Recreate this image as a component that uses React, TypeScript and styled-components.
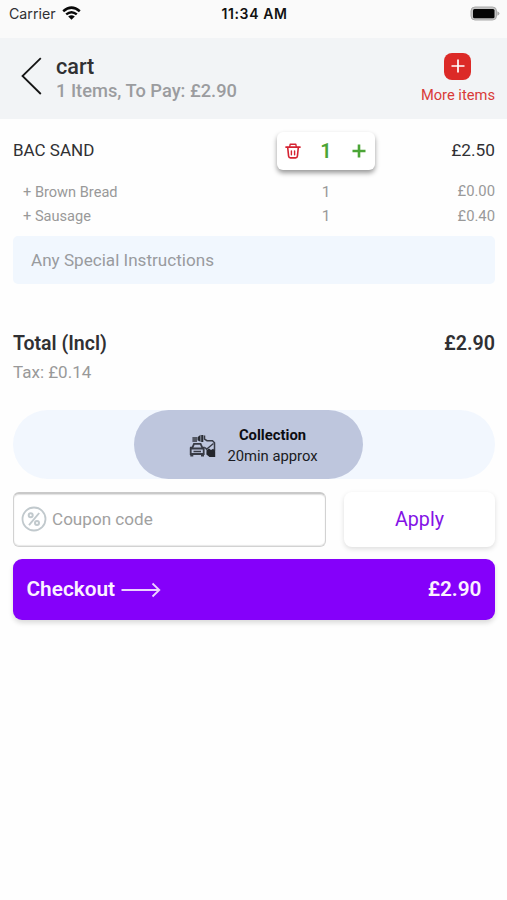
import React from "react";
import styled, { createGlobalStyle } from "styled-components";

const Global = createGlobalStyle`
  * { box-sizing: border-box; }
  body { margin: 0; background: #fefefe; font-family: Roboto, sans-serif; color: #303033; }
  button, input { font-family: inherit; border: 0; padding: 0; background: none; }
  svg { display: block; flex: none; }
`;

const Screen = styled.div`
  width: 507px;
  height: 900px;
  overflow: hidden;
  display: flex;
  flex-direction: column;
`;

const Label = styled.span<{ $size: number; $weight?: number; $color?: string; $track?: number }>`
  font-size: ${(p) => p.$size}px;
  font-weight: ${(p) => p.$weight ?? 400};
  color: ${(p) => p.$color ?? "#303033"};
  letter-spacing: ${(p) => p.$track ?? 0}px;
  line-height: 1.2;
  white-space: nowrap;
`;

const StatusBar = styled.div`
  height: 38px;
  padding: 0 7px 10px 9px;
  display: grid;
  grid-template-columns: 1fr auto 1fr;
  align-items: center;
  background: #fafafa;
  font-family: Inter, sans-serif;
`;

const StatusLeft = styled.div`
  display: flex;
  align-items: center;
  gap: 6px;
  > svg { margin-top: -1px; }
`;

const StatusRight = styled.div`
  display: flex;
  justify-content: flex-end;
  padding-bottom: 2px;
`;

const Header = styled.header`
  height: 81px;
  padding: 0 12px 0 20px;
  display: flex;
  align-items: center;
  background: #f2f4f6;
`;

const BackButton = styled.button`
  width: 36px;
  height: 40px;
  margin-top: -6px;
`;

const Titles = styled.div`
  flex: 1;
  display: flex;
  flex-direction: column;
  margin-top: -1px;
`;

const MoreItems = styled.button`
  display: flex;
  flex-direction: column;
  align-items: center;
  gap: 7px;
`;

const PlusTile = styled.span`
  width: 27px;
  height: 27px;
  border-radius: 8px;
  background: #dc2a27;
  display: grid;
  place-items: center;
`;

const Body = styled.main`
  padding: 13px 12px 0 13px;
  display: flex;
  flex-direction: column;
`;

const ItemRow = styled.div<{ $height: number; $indent?: number }>`
  height: ${(p) => p.$height}px;
  padding-left: ${(p) => p.$indent ?? 0}px;
  display: grid;
  grid-template-columns: 1fr 98px 120px;
  align-items: center;
  > :nth-child(2) { text-align: center; }
  > :last-child { text-align: right; }
  > span { margin-top: ${(p) => (p.$indent ? 0 : -2)}px; }
`;

const Stepper = styled.div`
  height: 38px;
  display: grid;
  grid-template-columns: 32px 34px 32px;
  align-items: center;
  justify-items: center;
  border-radius: 6px;
  background: #fff;
  box-shadow: 0 3px 5px rgba(0, 0, 0, 0.4);
`;

const Options = styled.div`
  padding: 10px 0 7px;
`;

const Instructions = styled.input`
  height: 48px;
  padding: 0 18px;
  border-radius: 5px;
  background: #f1f7fe;
  font-size: 17.1px;
  &::placeholder { color: #999b9e; opacity: 1; }
`;

const Summary = styled.div`
  padding: 48px 0 27px;
`;

const SummaryRow = styled.div<{ $height: number }>`
  height: ${(p) => p.$height}px;
  display: flex;
  align-items: center;
  justify-content: space-between;
  & + & { padding-top: 5px; }
`;

const MethodTrack = styled.div`
  height: 69px;
  display: flex;
  justify-content: center;
  padding-right: 12px;
  border-radius: 35px;
  background: #f2f7fe;
`;

const Method = styled.button`
  width: 229px;
  border-radius: 35px;
  background: #bec6dd;
  display: flex;
  align-items: center;
  justify-content: center;
  gap: 11px;
  padding: 3px 0 0 11px;
`;

const MethodText = styled.span`
  display: flex;
  flex-direction: column;
  align-items: center;
  gap: 3px;
`;

const CouponRow = styled.div`
  height: 55px;
  margin: 13px 0 12px;
  display: grid;
  grid-template-columns: 313px 151px;
  justify-content: space-between;
`;

const CouponField = styled.label`
  display: flex;
  align-items: center;
  gap: 5px;
  padding: 0 7px 2px;
  border: 1px solid #d2d2d2;
  border-top: 2px solid #c9c9c9;
  border-radius: 6px;
  background: #fff;
  box-shadow: inset 0 1px 1px #e2e2e2, inset 0 -1px 1px #e8e8e8;
`;

const CouponInput = styled.input`
  flex: 1;
  min-width: 0;
  font-size: 17.1px;
  &::placeholder { color: #a1a1a1; opacity: 1; }
`;

const ApplyButton = styled.button`
  border-radius: 8px;
  background: #fff;
  box-shadow: 0 2px 5px rgba(0, 0, 0, 0.13);
`;

const Checkout = styled.button`
  height: 61px;
  padding: 0 13.5px;
  display: flex;
  align-items: center;
  justify-content: space-between;
  border-radius: 9px;
  background: #8500fa;
  box-shadow: 0 3px 5px rgba(0, 0, 0, 0.14);
`;

const CheckoutLabel = styled.span`
  display: flex;
  align-items: center;
  gap: 6px;
  > svg { margin-top: 1px; }
`;

const WifiIcon = () => (
  <svg width="19" height="15" viewBox="0 0 19 15">
    <g fill="none" stroke="#080808" strokeWidth="2.5">
      <path d="M1.2 5.2Q9.5-2 17.8 5.2" />
      <path d="M4.2 8.4Q9.5 4 14.8 8.4" />
    </g>
    <path d="M6.2 10.5Q9.5 7.9 12.8 10.5L9.5 13.8Z" fill="#080808" />
  </svg>
);

const BatteryIcon = () => (
  <svg width="30" height="15" viewBox="0 0 30 15">
    <rect x="1" y="1" width="25.5" height="13" rx="4" fill="#c4c4c4" stroke="#aaa" strokeWidth="1" />
    <rect x="3" y="3" width="21.5" height="9.2" rx="1.5" fill="#050505" />
    <path d="M27.3 5.2Q29.5 6 29.5 7.5T27.3 9.8Z" fill="#aaa" />
  </svg>
);

const BackIcon = () => (
  <svg width="24" height="40" viewBox="0 0 24 40">
    <path d="M20.8 2.2L2.5 20L20.8 38" fill="none" stroke="#151515" strokeWidth="1.8" />
  </svg>
);

const PlusIcon = ({ size, color, width }: { size: number; color: string; width: number }) => (
  <svg width={size} height={size} viewBox="0 0 14 14">
    <path d="M7 0.5V13.5M0.5 7H13.5" stroke={color} strokeWidth={width} />
  </svg>
);

const TrashIcon = () => (
  <svg width="16" height="16" viewBox="0 0 16 16" fill="none" stroke="#d52332" strokeLinejoin="round" strokeLinecap="round">
    <path d="M1 4.1H15" strokeWidth="1.7" />
    <path d="M4.7 4L5.2 1.2H10.8L11.3 4" strokeWidth="1.4" />
    <path d="M2.7 4.5L3.6 13.2Q3.8 14.9 5.4 14.9H10.6Q12.2 14.9 12.4 13.2L13.3 4.5" strokeWidth="1.6" />
    <path d="M6.4 8V11.7M9.6 8V11.7" strokeWidth="1.4" />
  </svg>
);

const CarIcon = () => (
  <svg width="27" height="24" viewBox="0 0 27 24" fill="none" stroke="#383b45">
    <path d="M3.2 14.2L5 9.8H11.6L13.5 14.2" strokeWidth="1.8" />
    <path d="M1.7 14.5H14.7V20H1.7Z" strokeWidth="1.8" />
    <path d="M1 13.5H3M13.7 13.5H15.8M4.5 17.5H12" strokeWidth="1.7" />
    <path d="M2.8 20V22.5M13.5 20V22.5" strokeWidth="3" />
    <rect x="3.4" y="3" width="4.6" height="5" fill="#555965" stroke="none" />
    <path d="M8.5 3.2L11.5 0.8V7.7L8.5 6.2ZM12.2 1H14.3V8H12.2Z" fill="#292c33" stroke="none" />
    <path d="M15.5 1.5V5L18 6.7H23.5L25.5 8.7V17" strokeWidth="1.5" />
    <path d="M24.5 9.5L17.5 15.3L16.2 13.5" strokeWidth="1.4" />
    <path d="M17.5 16.2L20 14.5L22 16L24.2 14.8L26.2 17.2V23H20.5L17.4 20.5Z" fill="#24262c" stroke="none" />
  </svg>
);

const PercentIcon = () => (
  <svg width="26" height="26" viewBox="0 0 26 26" fill="none" stroke="#c1c9cd">
    <circle cx="13" cy="13" r="11.5" strokeWidth="1.8" />
    <path d="M18.2 7L8 19.2" strokeWidth="1.9" />
    <circle cx="9.7" cy="9.2" r="2" strokeWidth="2" />
    <circle cx="16" cy="16.9" r="2" strokeWidth="2" />
  </svg>
);

const ArrowIcon = () => (
  <svg width="40" height="16" viewBox="0 0 40 16">
    <path d="M0.5 8H38M31.5 1.5L38.3 8L31.5 14.5" fill="none" stroke="#ecd2ff" strokeWidth="1.8" />
  </svg>
);

const extras = [
  { name: "+ Brown Bread", price: "£0.00" },
  { name: "+ Sausage", price: "£0.40" },
];

export default function App() {
  return (
    <Screen>
      <Global />
      <StatusBar>
        <StatusLeft>
          <Label $size={14.2}>Carrier</Label>
          <WifiIcon />
        </StatusLeft>
        <Label $size={14} $weight={600} $color="#111" $track={0.6}>11:34 AM</Label>
        <StatusRight><BatteryIcon /></StatusRight>
      </StatusBar>
      <Header>
        <BackButton aria-label="Back"><BackIcon /></BackButton>
        <Titles>
          <Label $size={21.6} $weight={500}>cart</Label>
          <Label $size={18.3} $weight={500} $color="#9b9c9f">1 Items, To Pay: £2.90</Label>
        </Titles>
        <MoreItems>
          <PlusTile><PlusIcon size={14} color="#fff" width={1.7} /></PlusTile>
          <Label $size={14.7} $color="#d93a38">More items</Label>
        </MoreItems>
      </Header>
      <Body>
        <ItemRow $height={38}>
          <Label $size={17}>BAC SAND</Label>
          <Stepper>
            <TrashIcon />
            <Label $size={20} $weight={600} $color="#4ba536">1</Label>
            <PlusIcon size={14} color="#4ba536" width={2.6} />
          </Stepper>
          <Label $size={17.3}>£2.50</Label>
        </ItemRow>
        <Options>
          {extras.map((e) => (
            <ItemRow key={e.name} $height={24.5} $indent={10}>
              <Label $size={14.6} $color="#999">{e.name}</Label>
              <Label $size={15.5} $color="#999">1</Label>
              <Label $size={14.8} $color="#999">{e.price}</Label>
            </ItemRow>
          ))}
        </Options>
        <Instructions placeholder="Any Special Instructions" />
        <Summary>
          <SummaryRow $height={24}>
            <Label $size={19.5} $weight={600}>Total (Incl)</Label>
            <Label $size={19.7} $weight={600}>£2.90</Label>
          </SummaryRow>
          <SummaryRow $height={27}>
            <Label $size={17} $color="#999">Tax: £0.14</Label>
          </SummaryRow>
        </Summary>
        <MethodTrack>
          <Method>
            <CarIcon />
            <MethodText>
              <Label $size={14.8} $weight={700} $color="#0c0d12">Collection</Label>
              <Label $size={14.8} $color="#1a1b22">20min approx</Label>
            </MethodText>
          </Method>
        </MethodTrack>
        <CouponRow>
          <CouponField>
            <PercentIcon />
            <CouponInput placeholder="Coupon code" />
          </CouponField>
          <ApplyButton><Label $size={19.7} $color="#8412e6">Apply</Label></ApplyButton>
        </CouponRow>
        <Checkout>
          <CheckoutLabel>
            <Label $size={20.8} $weight={600} $color="#fbf1ff">Checkout</Label>
            <ArrowIcon />
          </CheckoutLabel>
          <Label $size={20.8} $weight={600} $color="#fbf1ff">£2.90</Label>
        </Checkout>
      </Body>
    </Screen>
  );
}
